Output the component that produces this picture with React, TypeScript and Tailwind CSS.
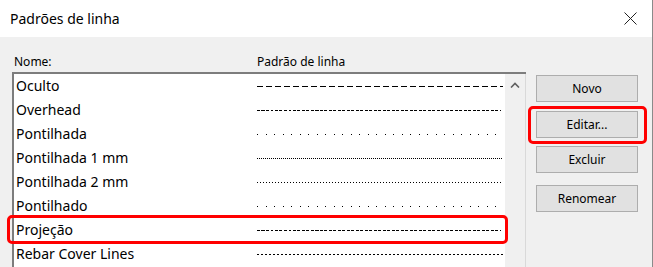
interface LineRow {
  name: string;
  dash: string;
  end: number;
}

const rows: LineRow[] = [
  { name: "Oculto", dash: "6 3", end: 246 },
  { name: "Overhead", dash: "3 1.5", end: 244 },
  { name: "Pontilhada", dash: "1 7.5", end: 241 },
  { name: "Pontilhada 1 mm", dash: "1 1", end: 246 },
  { name: "Pontilhada 2 mm", dash: "1 2", end: 245 },
  { name: "Pontilhado", dash: "1 7.5", end: 241 },
  { name: "Projeção", dash: "3 1.5", end: 244 },
  { name: "Rebar Cover Lines", dash: "2 2", end: 246 },
];

const buttons = [
  { label: "Novo", mt: "mt-[38px]" },
  { label: "Editar...", mt: "mt-[9px]" },
  { label: "Excluir", mt: "mt-[8px]" },
  { label: "Renomear", mt: "mt-[12px]" },
];

function Pattern({ dash, end }: { dash: string; end: number }) {
  return (
    <svg width={247} height={2} className="block" shapeRendering="crispEdges">
      <line x1={0} y1={1} x2={end} y2={1} stroke="#000" strokeWidth={1} strokeDasharray={dash} />
    </svg>
  );
}

export default function App() {
  return (
    <div
      className="relative w-[653px] h-[267px] overflow-hidden bg-[#f0f0f0] border-r border-[#8a8a8a] text-black"
      style={{ fontFamily: '"Noto Sans", "Open Sans", sans-serif' }}
    >
      {/* title bar */}
      <div className="h-[37px] bg-white flex items-center justify-between pl-[10px] pr-[15px]">
        <span className="text-[14px] leading-none">Padrões de linha</span>
        <svg width={13} height={13} viewBox="0 0 13 13">
          <path d="M0.5 0.5 L12.5 12.5 M12.5 0.5 L0.5 12.5" stroke="#222" strokeWidth={1} fill="none" />
        </svg>
      </div>

      <div className="flex">
        {/* list column */}
        <div className="ml-[12px] w-[514px]">
          <div className="h-[35px] flex pt-[17px] text-[12px] leading-[16px]">
            <span className="pl-[2px] w-[245px]">Nome:</span>
            <span>Padrão de linha</span>
          </div>
          <div className="flex border-t-2 border-l-2 border-[#7d7d7d] bg-white h-[200px]">
            <div className="flex-1 flex flex-col">
              {rows.map((row) => (
                <div key={row.name} className="h-[24px] flex items-center text-[14px] leading-[20px] pb-[1px]">
                  <span className="w-[243px] pl-[2px]">{row.name}</span>
                  <Pattern dash={row.dash} end={row.end} />
                </div>
              ))}
            </div>
            <div className="w-[22px] bg-[#f0f0f0] border-l border-white border-r border-r-[#d9d9d9] flex justify-center pt-[8px]">
              <svg width={10} height={6} viewBox="0 0 10 6" className="block">
                <path d="M1 5.5 L5 1.5 L9 5.5" stroke="#606060" strokeWidth={1.6} fill="none" />
              </svg>
            </div>
          </div>
        </div>

        {/* button column */}
        <div className="ml-[10px] flex flex-col">
          {buttons.map((b) => (
            <button
              key={b.label}
              className={`${b.mt} w-[102px] h-[27px] bg-[#e1e1e1] border border-[#adadad] text-[12px] leading-none`}
            >
              {b.label}
            </button>
          ))}
        </div>
      </div>

      {/* highlight annotations */}
      <div className="absolute left-[7px] top-[215px] w-[501px] h-[29px] border-[3px] border-[#f00] rounded-[5px]" />
      <div className="absolute left-[528px] top-[106px] w-[119px] h-[38px] border-[3px] border-[#f00] rounded-[5px]" />
    </div>
  );
}
